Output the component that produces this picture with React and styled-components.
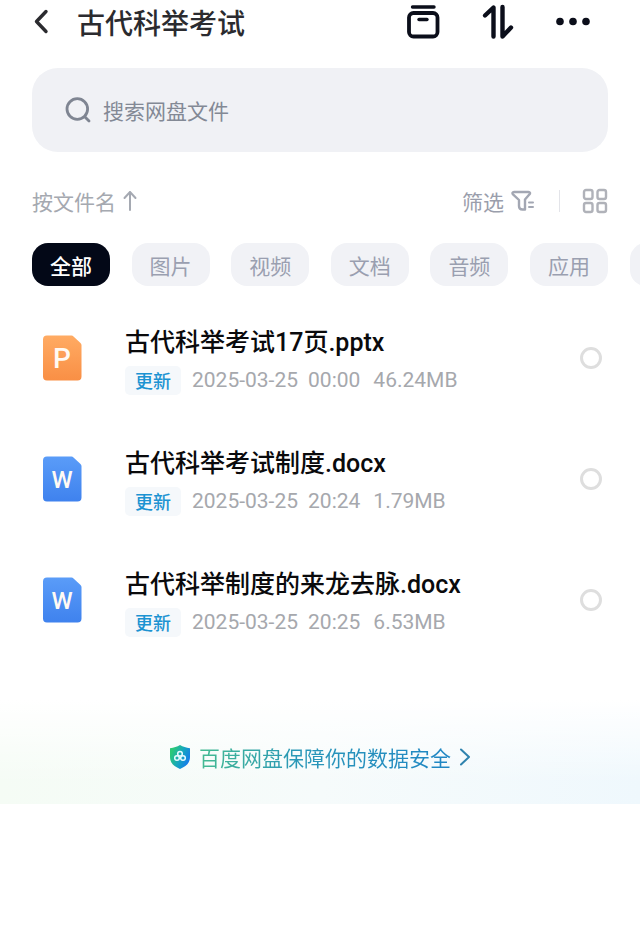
import * as React from "react";
import styled, { createGlobalStyle, css } from "styled-components";

const categories = ["全部", "图片", "视频", "文档", "音频", "应用"];

const files = [
  { id: 1, type: "ppt", name: "古代科举考试17页.pptx", date: "2025-03-25", time: "00:00", size: "46.24MB" },
  { id: 2, type: "doc", name: "古代科举考试制度.docx", date: "2025-03-25", time: "20:24", size: "1.79MB" },
  { id: 3, type: "doc", name: "古代科举制度的来龙去脉.docx", date: "2025-03-25", time: "20:25", size: "6.53MB" },
];

const fileTypes = {
  ppt: { letter: "P", from: "#ffab63", to: "#f98f45" },
  doc: { letter: "W", from: "#5a9cf8", to: "#3f82ee" },
};

const BackIcon = () => (
  <svg width="18" height="26" viewBox="0 0 18 26" fill="none">
    <path d="M13 2.500 3.500 12.500 13 22.500" stroke="#2b2b2f" strokeWidth="3.400" strokeLinecap="round" strokeLinejoin="round" />
  </svg>
);

const BoxIcon = () => (
  <svg width="34" height="36" viewBox="0 0 34 36" fill="none" stroke="#0b0e1a" strokeLinecap="round">
    <path d="M6.500 3h21.500" strokeWidth="3.400" />
    <rect x="3" y="9" width="28.500" height="23.500" rx="4.500" strokeWidth="3.800" />
    <path d="M13 15.500h8" strokeWidth="3.400" />
  </svg>
);

const SwapIcon = () => (
  <svg width="34" height="36" viewBox="0 0 34 36" fill="none" stroke="#0b0e1a" strokeWidth="4.400" strokeLinecap="round" strokeLinejoin="round">
    <path d="M4 11.500 12.500 3.500v29" />
    <path d="M21.500 3v29.500l8.500-9" />
  </svg>
);

const DotsIcon = () => (
  <svg width="36" height="36" viewBox="0 0 36 36" fill="#0b0e1a">
    <circle cx="5" cy="17.500" r="3.800" />
    <circle cx="18" cy="17.500" r="3.800" />
    <circle cx="31" cy="17.500" r="3.800" />
  </svg>
);

const SearchIcon = () => (
  <svg width="26" height="26" viewBox="0 0 26 26" fill="none" stroke="#7f8592" strokeWidth="2.800" strokeLinecap="round">
    <circle cx="12.300" cy="12" r="10.300" />
    <path d="m20 20 4 4" />
  </svg>
);

const ArrowUpIcon = () => (
  <svg width="14" height="22" viewBox="0 0 14 22" fill="none" stroke="#a5a9b2" strokeWidth="2" strokeLinecap="round" strokeLinejoin="round">
    <path d="M7 20V2M1.500 8 7 2l5.500 6" />
  </svg>
);

const FilterIcon = () => (
  <svg width="24" height="22" viewBox="0 0 24 22" fill="none" stroke="#a3a7b3" strokeWidth="2.400" strokeLinecap="round" strokeLinejoin="round">
    <path d="M3 2h14.500c1.500 0 2 1.300 1 2.300L14 9.500V19.500H11.500C9.500 19.500 8 18 8 16V10L2 4.300C1 3.300 1.500 2 3 2Z" />
    <path d="M18 12.500h4M18 17h4" strokeWidth="2" />
  </svg>
);

const GridIcon = () => (
  <svg width="26" height="26" viewBox="0 0 26 26" fill="none" stroke="#b0b2b9" strokeWidth="2.400">
    <rect x="2" y="2" width="8.500" height="9" rx="2" />
    <rect x="15.500" y="2" width="8.500" height="9" rx="2" />
    <rect x="2" y="15" width="8.500" height="9" rx="2" />
    <rect x="15.500" y="15" width="8.500" height="9" rx="2" />
  </svg>
);

const FileIcon = ({ type }) => {
  const { letter, from, to } = fileTypes[type];
  return (
    <svg width="40" height="46" viewBox="0 0 40 46" aria-hidden="true">
      <defs>
        <linearGradient id={`fill-${type}`} x1="0" y1="0" x2="0" y2="1">
          <stop offset="0" stopColor={from} />
          <stop offset="1" stopColor={to} />
        </linearGradient>
      </defs>
      <path d="M5 0.500H29.500a3 3 0 0 1 2 1L38.500 8a3 3 0 0 1 1 2V41.500a4 4 0 0 1-4 4H5a4 4 0 0 1-4-4v-37a4 4 0 0 1 4-4Z" fill={`url(#fill-${type})`} />
      <text
        x="20"
        y={type === "doc" ? 32 : 33}
        textAnchor="middle"
        fill="#fffaf3"
        fontFamily="Roboto, sans-serif"
        fontSize={type === "doc" ? 24 : 28}
        fontWeight="500"
      >
        {letter}
      </text>
    </svg>
  );
};

const ShieldIcon = () => (
  <svg width="22" height="26" viewBox="0 0 22 26" fill="none" aria-hidden="true">
    <defs>
      <linearGradient id="shield" x1="0" y1="0.200" x2="1" y2="0.700">
        <stop offset="0.100" stopColor="#2bc878" />
        <stop offset="0.550" stopColor="#16a5c0" />
        <stop offset="1" stopColor="#1676f0" />
      </linearGradient>
    </defs>
    <path d="M11 1c3 1.800 6 2.800 10 3.200V13c0 6-4 9.500-10 12C5 22.500 1 19 1 13V4.200C5 3.800 8 2.800 11 1Z" fill="url(#shield)" />
    <g stroke="#e8fbff" strokeWidth="1.500">
      <circle cx="11" cy="9.800" r="2.300" />
      <circle cx="8" cy="14" r="2.300" />
      <circle cx="14" cy="14" r="2.300" />
    </g>
  </svg>
);

const ChevronIcon = () => (
  <svg width="12" height="18" viewBox="0 0 12 18" fill="none" aria-hidden="true">
    <path d="m2 1.500 8 7.500-8 7.500" stroke="#2f83ae" strokeWidth="2" strokeLinecap="round" strokeLinejoin="round" />
  </svg>
);

export default function App() {
  const [active, setActive] = React.useState("全部");

  return (
    <Page>
      <GlobalStyle />
      <Header>
        <IconButton aria-label="返回">
          <BackIcon />
        </IconButton>
        <Title>古代科举考试</Title>
        <Actions>
          <IconButton $width={48} aria-label="收纳">
            <BoxIcon />
          </IconButton>
          <IconButton $width={48} aria-label="传输列表">
            <SwapIcon />
          </IconButton>
          <IconButton $width={48} aria-label="更多">
            <DotsIcon />
          </IconButton>
        </Actions>
      </Header>

      <SearchBox>
        <SearchIcon />
        <SearchInput type="search" aria-label="搜索" placeholder="搜索网盘文件" />
      </SearchBox>

      <Toolbar>
        <ToolButton $muted>
          按文件名
          <ArrowUpIcon />
        </ToolButton>
        <ToolGroup>
          <ToolButton>
            筛选
            <FilterIcon />
          </ToolButton>
          <Divider />
          <IconButton aria-label="宫格视图">
            <GridIcon />
          </IconButton>
        </ToolGroup>
      </Toolbar>

      <Categories>
        {categories.map((name) => (
          <Chip key={name} $active={name === active} aria-pressed={name === active} onClick={() => setActive(name)}>
            {name}
          </Chip>
        ))}
        <Chip aria-label="更多分类" />
      </Categories>

      <FileList>
        {files.map((file) => (
          <FileRow key={file.id}>
            <FileIcon type={file.type} />
            <FileInfo>
              <FileName htmlFor={`file-${file.id}`}>{file.name}</FileName>
              <FileMeta>
                <Badge>更新</Badge>
                <span>{file.date}</span>
                <Time>{file.time}</Time>
                <span>{file.size}</span>
              </FileMeta>
            </FileInfo>
            <Check type="checkbox" id={`file-${file.id}`} />
          </FileRow>
        ))}
      </FileList>

      <Banner>
        <BannerLink href="#security">
          <ShieldIcon />
          <BannerText>百度网盘保障你的数据安全</BannerText>
          <ChevronIcon />
        </BannerLink>
      </Banner>
    </Page>
  );
}

const GlobalStyle = createGlobalStyle`
  * {
    box-sizing: border-box;
  }

  body {
    margin: 0;
    background: #fff;
    font-family: "Noto Sans CJK SC", sans-serif;
  }

  button, input {
    font-family: inherit;
  }

  svg {
    display: block;
    flex: none;
  }
`;

const Page = styled.div`
  display: flex;
  flex-direction: column;
  overflow-x: hidden;
`;

const Header = styled.header`
  display: flex;
  align-items: center;
  height: 44px;
  padding: 0 43px 0 33px;
`;

const IconButton = styled.button`
  display: flex;
  align-items: center;
  justify-content: center;
  width: ${({ $width }) => ($width ? `${$width}px` : "auto")};
  padding: 0;
  border: 0;
  background: none;
  cursor: pointer;
`;

const Title = styled.h1`
  margin: 0 0 0 26px;
  color: #2b2b2f;
  font-size: 28px;
  font-weight: 500;
  line-height: 40px;
`;

const Actions = styled.div`
  display: flex;
  gap: 27px;
  margin-left: auto;
`;

const SearchBox = styled.div`
  display: flex;
  align-items: center;
  gap: 12px;
  height: 84px;
  margin: 24px 32px 0;
  padding: 0 32px 0 33px;
  border-radius: 26px;
  background: #f0f1f5;
`;

const SearchInput = styled.input`
  flex: 1;
  min-width: 0;
  padding: 0;
  border: 0;
  outline: 0;
  background: none;
  color: #2b2b2f;
  font-size: 21px;
  line-height: 30px;

  &::placeholder {
    color: #838995;
    opacity: 1;
  }
`;

const Toolbar = styled.div`
  display: flex;
  align-items: center;
  justify-content: space-between;
  height: 42px;
  margin-top: 28px;
  padding: 0 32px;
`;

const ToolButton = styled.button`
  display: flex;
  align-items: center;
  gap: 7px;
  padding: 0;
  border: 0;
  background: none;
  color: ${({ $muted }) => ($muted ? "#a5a9b0" : "#9a9eac")};
  font-size: 21px;
  line-height: 30px;
  cursor: pointer;
`;

const ToolGroup = styled.div`
  display: flex;
  align-items: center;
`;

const Divider = styled.span`
  width: 1px;
  height: 22px;
  margin: 0 22px 0 24px;
  background: #e3e4e9;
`;

/* six chips span the page width, the seventh peeks in from the right */
const Categories = styled.nav`
  display: flex;
  column-gap: calc((100% - 500px) / 5);
  margin-top: 21px;
  padding-left: 32px;
  overflow-x: auto;
  scrollbar-width: none;
`;

const Chip = styled.button`
  flex: none;
  width: 78px;
  height: 43px;
  padding: 0;
  border: 0;
  border-radius: 16px;
  background: #f1f2f6;
  color: #9a9fb0;
  font-size: 21px;
  line-height: 30px;
  cursor: pointer;

  ${({ $active }) =>
    $active &&
    css`
      background: #030817;
      color: #fff;
      font-weight: 500;
    `}
`;

const FileList = styled.ul`
  margin: 11px 0 0;
  padding: 0;
  font-family: Roboto, "Noto Sans CJK SC", sans-serif;
  list-style: none;
`;

const FileRow = styled.li`
  display: flex;
  align-items: center;
  height: 121px;
  padding: 0 38px 0 42px;
`;

const FileInfo = styled.div`
  flex: 1;
  min-width: 0;
  margin-left: 43px;
`;

const FileName = styled.label`
  display: block;
  overflow: hidden;
  color: #0a0a0c;
  font-size: 25px;
  font-weight: 500;
  line-height: 46px;
  text-overflow: ellipsis;
  white-space: nowrap;
`;

const FileMeta = styled.div`
  display: flex;
  align-items: center;
  color: #a6a8ad;
  font-size: 21px;
  line-height: 29px;
`;

const Badge = styled.span`
  margin-right: 11px;
  padding: 0 10px;
  border-radius: 5px;
  background: #f5f8fb;
  color: #1c93d2;
  font-family: "Noto Sans CJK SC", sans-serif;
  font-size: 18px;
  font-weight: 500;
`;

const Time = styled.span`
  margin: 0 13px 0 10px;
`;

const Check = styled.input`
  appearance: none;
  width: 22px;
  height: 22px;
  margin: 0;
  border: 3px solid #dedede;
  border-radius: 50%;
  cursor: pointer;

  &:checked {
    border-color: #1c93d2;
    background: #1c93d2;
  }
`;

const Banner = styled.footer`
  display: flex;
  justify-content: center;
  margin-top: 40px;
  padding: 42px 0 32px;
  background: linear-gradient(#fff, rgb(255 255 255 / 0%) 80%),
    linear-gradient(90deg, #f5fcf5, #f6fbfb 50%, #eff8fd);
`;

const BannerLink = styled.a`
  display: flex;
  align-items: center;
  text-decoration: none;
`;

const BannerText = styled.span`
  margin: 0 8px;
  background: linear-gradient(90deg, #45bb92, #2a97b8 40%, #1f86c4);
  background-clip: text;
  color: transparent;
  font-size: 21px;
  line-height: 30px;
`;
